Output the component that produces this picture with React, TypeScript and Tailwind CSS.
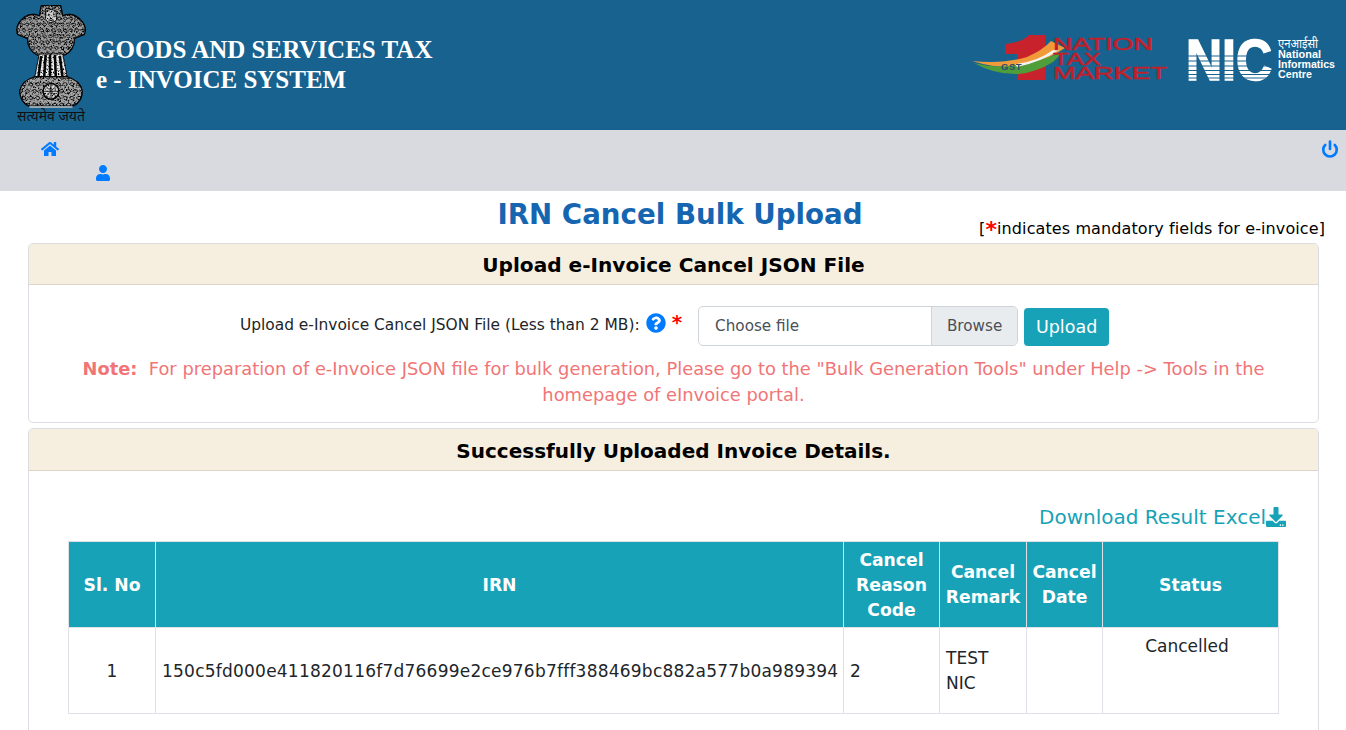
import React from "react";
import { FaHome, FaUser, FaQuestionCircle, FaDownload } from "react-icons/fa";
import { FiPower } from "react-icons/fi";

function curls(x0: number, y0: number, x1: number, y1: number, step: number) {
  const out: string[] = [];
  for (let y = y0, row = 0; y < y1; y += step, row++) {
    for (let x = x0 + (row % 2) * step * 0.5; x < x1; x += step) {
      out.push(`M${x} ${y}q${step * 0.5} ${-step * 0.55} ${step * 0.75} 0q${-step * 0.3} ${step * 0.45} ${-step * 0.55} ${step * 0.1}`);
    }
  }
  return out.join("");
}

function Emblem() {
  return (
    <svg width="72" height="104" viewBox="0 0 72 106" className="block">
      <defs>
        <filter id="grit" x="0" y="0" width="100%" height="100%">
          <feTurbulence type="fractalNoise" baseFrequency="0.6" numOctaves="2" seed="7" result="n" />
          <feColorMatrix in="n" values="0 0 0 0 0  0 0 0 0 0  0 0 0 0 0  4 0 0 0 -1.8" result="dark" />
          <feComposite in="dark" in2="SourceAlpha" operator="in" result="darkIn" />
          <feMerge>
            <feMergeNode in="SourceGraphic" />
            <feMergeNode in="darkIn" />
          </feMerge>
        </filter>
        <clipPath id="top">
          <path d="M26 1 Q36 -1 46 1 L48 11 Q58 7 66 15 Q73 22 70 30 L60 34 Q60 46 50 51 L22 51 Q12 46 12 34 L2 30 Q-1 22 6 15 Q14 7 24 11 Z" />
        </clipPath>
        <clipPath id="base">
          <path d="M20 73 Q6 77 4 88 Q5 100 14 103 L58 103 Q67 100 68 88 Q66 77 52 73 Z" />
        </clipPath>
      </defs>
      <g filter="url(#grit)">
        <path d="M26 1 Q36 -1 46 1 L48 11 Q58 7 66 15 Q73 22 70 30 L60 34 Q60 46 50 51 L22 51 Q12 46 12 34 L2 30 Q-1 22 6 15 Q14 7 24 11 Z" fill="#a0a0a0" stroke="#0c0c0c" strokeWidth="1.3" />
        <g clipPath="url(#top)">
          <path d={curls(0, 2, 72, 52, 6)} stroke="#0c0c0c" strokeWidth="0.9" fill="none" />
          <path d="M31 6 Q36 3 41 6 L42 15 Q36 21 30 15 Z" fill="#d0d0d0" stroke="#0c0c0c" strokeWidth="0.9" />
          <path d="M33 10h2M38 10h2M34 15q2 2 4 0" stroke="#0c0c0c" strokeWidth="1" fill="none" />
        </g>
        <path d="M24 50 L48 50 L53 76 L19 76 Z" fill="#f0f0f0" stroke="#0c0c0c" strokeWidth="0.9" />
        <path d="M26 52 L23 75 M30.5 51 L29 75 M35 51 L35 75 M40 51 L41 75 M45 52 L48 75" stroke="#0c0c0c" strokeWidth="2.6" fill="none" />
        <path d="M20 73 Q6 77 4 88 Q5 100 14 103 L58 103 Q67 100 68 88 Q66 77 52 73 Z" fill="#a8a8a8" stroke="#0c0c0c" strokeWidth="1.3" />
        <g clipPath="url(#base)">
          <path d={curls(2, 74, 70, 104, 7)} stroke="#0c0c0c" strokeWidth="0.9" fill="none" />
        </g>
        <circle cx="36" cy="88" r="8" fill="#d5d5d5" stroke="#0c0c0c" strokeWidth="1.5" />
        <path d="M36 80 V96 M28 88 H44 M30.5 82.5 L41.5 93.5 M41.5 82.5 L30.5 93.5" stroke="#0c0c0c" strokeWidth="0.8" />
      </g>
      <rect x="14" y="103" width="44" height="2" fill="#9aa8b2" />
    </svg>
  );
}

function NationLogo() {
  return (
    <svg width="198" height="54" viewBox="0 0 198 54" className="block overflow-visible">
      <path d="M30 14 Q48 12 54 5 L70 5 L70 50 L42 50 L42 24 L30 24 Z" fill="#c8222c" />
      <path d="M-3 31 Q30 34 52 27 Q68 20 76 11 L90 18 Q72 30 52 36 Q26 40 -3 31 Z" fill="#f09a3a" />
      <path d="M50 33 Q68 30 88 22 L78 32 Q62 42 44 44 Q20 45 -1 33 Q28 40 50 33 Z" fill="#4f9e3a" />
      <path d="M40 34 Q62 32 78 20 L84 20 Q66 32 42 37 Z" fill="#f3f3f3" />
      <text x="26" y="40" fontFamily="'Liberation Sans', sans-serif" fontWeight="700" fontSize="9.5" fill="#2b4a6e" letterSpacing="0.5">GST</text>
      <g fontFamily="'Liberation Sans', sans-serif" fontSize="16.5" fill="#c01f2a" stroke="#c01f2a" strokeWidth="0.5">
        <text x="78" y="20" textLength="100" lengthAdjust="spacingAndGlyphs">NATION</text>
        <text x="78" y="35" textLength="48" lengthAdjust="spacingAndGlyphs">TAX</text>
        <text x="78" y="49" textLength="114" lengthAdjust="spacingAndGlyphs">MARKET</text>
      </g>
    </svg>
  );
}

function NicLogo() {
  return (
    <svg width="150" height="48" viewBox="0 0 150 48" className="block overflow-visible">
      <text x="-2" y="45" fontFamily="'Liberation Sans', sans-serif" fontWeight="700" fontSize="58" fill="#fff" stroke="#fff" strokeWidth="1.6" textLength="86" lengthAdjust="spacingAndGlyphs">NIC</text>
      <path d="M-3 21H88 M-3 26H88 M-3 31H88 M-3 35.5H88 M-3 39.5H88 M-3 43H88" stroke="#186290" strokeWidth="1.1" />
      <g fontFamily="'Liberation Sans', sans-serif" fontWeight="700" fill="#fff" fontSize="11">
        <text x="90" y="13" fontSize="13" fontWeight="400" textLength="40" lengthAdjust="spacingAndGlyphs" fontFamily="'Noto Sans Devanagari', 'Noto Sans', sans-serif">एनआईसी</text>
        <text x="90" y="23" textLength="43" lengthAdjust="spacingAndGlyphs">National</text>
        <text x="90" y="33" textLength="57" lengthAdjust="spacingAndGlyphs">Informatics</text>
        <text x="90" y="43" textLength="34" lengthAdjust="spacingAndGlyphs">Centre</text>
      </g>
    </svg>
  );
}

const th = "border border-[#dee2e6] bg-[#17a2b8] text-white font-bold text-center align-middle text-[17.2px] leading-[25px] p-0";
const td = "border border-[#dee2e6] text-[#212529] text-[17px] leading-[25px] pt-[1px]";

export default function App() {
  return (
    <div className="h-[730px] overflow-hidden bg-white text-[#212529] font-['DejaVu_Sans',Verdana,sans-serif]">
      <header className="h-[130px] bg-[#186290] flex items-start justify-between">
        <div className="flex items-start pl-[15px]">
          <div className="w-[71px] pt-[5px]">
            <Emblem />
            <div className="mt-[2px] ml-[2px] text-[14px] leading-[14px] text-[#111] font-['Noto_Sans_Devanagari','Noto_Sans','Liberation_Serif',serif] whitespace-nowrap">सत्यमेव जयते</div>
          </div>
          <div className="ml-[10px] mt-[35px] font-['Liberation_Serif',serif] font-bold text-white text-[25px] leading-[30px]">
            <div>GOODS AND SERVICES TAX</div>
            <div>e - INVOICE SYSTEM</div>
          </div>
        </div>
        <div className="flex items-start pt-[30px] pr-[8px] gap-[15px]">
          <NationLogo />
          <div className="pt-[5px]"><NicLogo /></div>
        </div>
      </header>

      <nav className="h-[61px] bg-[#d9dae0] relative text-[#007bff]">
        <FaHome className="absolute left-[41px] top-[10px] text-[18px]" />
        <FaUser className="absolute left-[95px] top-[35px] text-[16px]" />
        <FiPower className="absolute right-[7px] top-[10px] text-[18px] stroke-[3.5]" />
      </nav>

      <main className="px-[28px]">
        <div className="relative h-[52px]">
          <h2 className="text-center pl-[14px] pt-[1px] text-[27.7px] leading-[46px] font-bold text-[#1565b0]">IRN Cancel Bulk Upload</h2>
          <div className="absolute right-[-7px] top-[26px] text-[16px] tracking-[0.1px] leading-[24px] text-black whitespace-nowrap">
            [<span className="text-[#ff0000] font-bold text-[22px] leading-[20px] align-[-3px]">*</span>indicates mandatory fields for e-invoice]
          </div>
        </div>

        <section className="border border-[#dcdde3] rounded-[5px] overflow-hidden h-[180px] w-[1291px]">
          <div className="h-[41px] bg-[#f6efe0] border-b border-[#ddd6c8] text-center text-[20.1px] font-bold leading-[42px] text-black">Upload e-Invoice Cancel JSON File</div>
          <div className="flex items-center justify-center pt-[20px] pl-[2px]">
            <label className="text-[15.45px] text-[#212529] mr-[6px]">Upload e-Invoice Cancel JSON File (Less than 2 MB):</label>
            <FaQuestionCircle className="text-[#007bff] text-[20px] mb-[5px]" />
            <span className="text-[#ff0000] font-bold text-[20px] ml-[6px] mr-[16px] leading-[20px] mb-[7px]">*</span>
            <div className="w-[320px] h-[40px] flex border border-[#ced4da] rounded-[5px] overflow-hidden text-[15.2px] text-[#495057] leading-[38px]">
              <div className="flex-1 pl-[16px]">Choose file</div>
              <div className="w-[86px] bg-[#e9ecef] border-l border-[#ced4da] text-center">Browse</div>
            </div>
            <button className="ml-[6px] mt-[3px] w-[85px] h-[38px] rounded-[4px] bg-[#17a2b8] text-white text-[17.5px]">Upload</button>
          </div>
          <div className="mt-[10px] px-[40px] text-center text-[17.85px] leading-[26px] text-[#f17577]">
            <span className="font-bold">Note:</span>&nbsp; For preparation of e-Invoice JSON file for bulk generation, Please go to the "Bulk Generation Tools" under Help -&gt; Tools in the homepage of eInvoice portal.
          </div>
        </section>

        <section className="mt-[5px] border border-[#dcdde3] rounded-[5px] overflow-hidden w-[1291px] h-[400px]">
          <div className="h-[42px] bg-[#f6efe0] border-b border-[#ddd6c8] text-center text-[20px] font-bold leading-[44px] text-black">Successfully Uploaded Invoice Details.</div>
          <div className="px-[39px]">
            <div className="h-[70px] flex items-end justify-end pb-[10px] text-[#17a2b8] text-[20px] leading-[28px] mr-[-7px]">
              Download Result Excel<FaDownload className="text-[20px] mb-[4px]" />
            </div>
            <table className="border-collapse table-fixed w-[1210px]">
              <colgroup>
                <col className="w-[87px]" />
                <col className="w-[688px]" />
                <col className="w-[96px]" />
                <col className="w-[87px]" />
                <col className="w-[76px]" />
                <col className="w-[176px]" />
              </colgroup>
              <thead>
                <tr className="h-[86px]">
                  <th className={th + " pt-[2px]"}>Sl. No</th>
                  <th className={th + " pt-[2px]"}>IRN</th>
                  <th className={th + " pt-[2px]"}>Cancel Reason Code</th>
                  <th className={th}>Cancel Remark</th>
                  <th className={th}>Cancel Date</th>
                  <th className={th + " pt-[2px]"}>Status</th>
                </tr>
              </thead>
              <tbody>
                <tr className="h-[86px]">
                  <td className={td + " text-center"}>1</td>
                  <td className={td + " pl-[6px] whitespace-nowrap tracking-[0.23px]"}>150c5fd000e411820116f7d76699e2ce976b7fff388469bc882a577b0a989394</td>
                  <td className={td + " pl-[6px]"}>2</td>
                  <td className={td + " pl-[6px] pr-[6px]"}>TEST NIC</td>
                  <td className={td}></td>
                  <td className={td + " align-top text-center pt-[6px] pr-[7px]"}>Cancelled</td>
                </tr>
              </tbody>
            </table>
          </div>
        </section>
      </main>
    </div>
  );
}
